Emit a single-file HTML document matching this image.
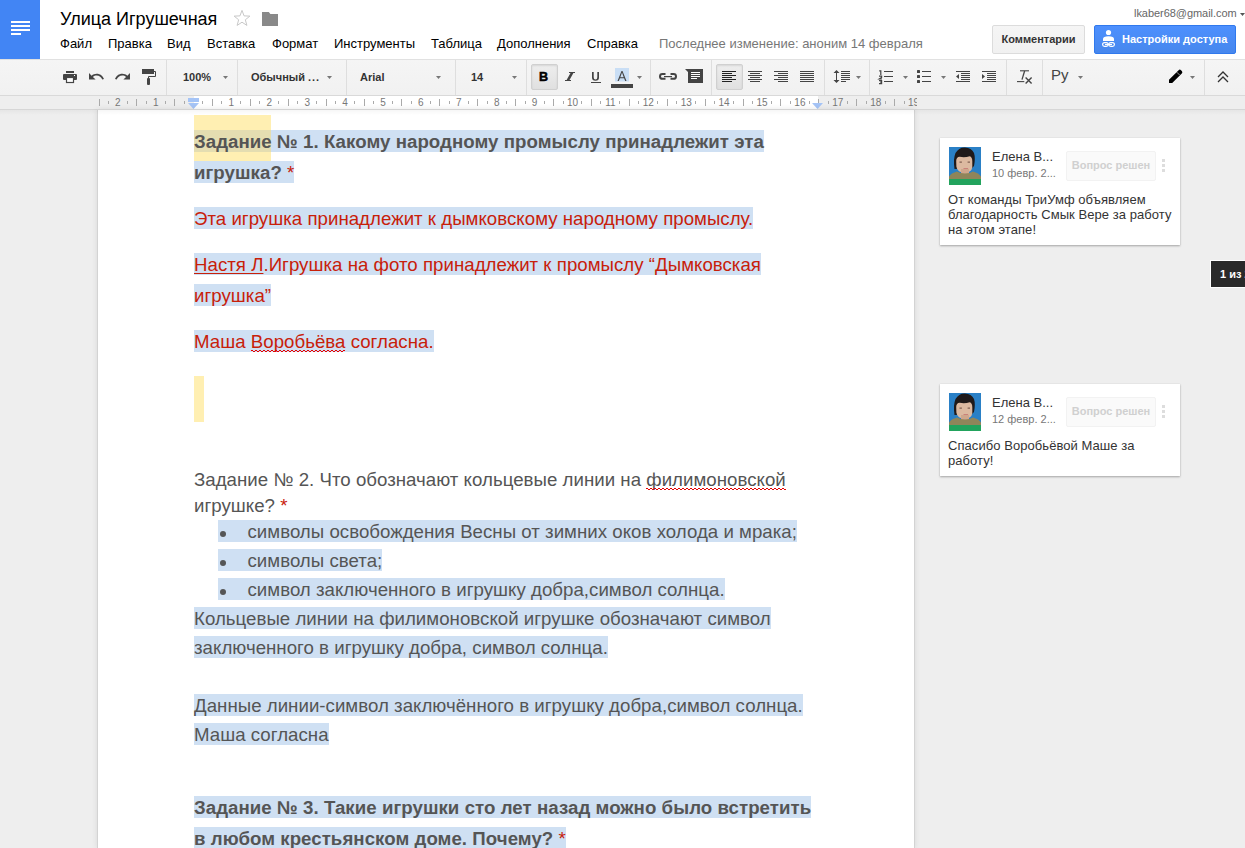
<!DOCTYPE html>
<html><head><meta charset="utf-8">
<style>
*{margin:0;padding:0;box-sizing:border-box}
html,body{width:1245px;height:848px;overflow:hidden;background:#fff;font-family:"Liberation Sans",sans-serif}
.a{position:absolute;white-space:nowrap}
#hdr{position:absolute;left:0;top:0;width:1245px;height:60px;background:#fff;border-bottom:1px solid #e1e1e1}
#logo{position:absolute;left:0;top:0;width:40px;height:59px;background:#4285f4}
#logo i{position:absolute;left:11px;height:2px;background:#fff;width:19px}
#title{left:60px;top:9px;font-size:18px;color:#000;line-height:21px}
.menu{top:36px;font-size:13px;color:#000;line-height:15px}
#lastmod{left:659px;top:36px;font-size:13px;color:#777;line-height:15px}
#email{left:1134px;top:7px;font-size:11px;color:#666;line-height:13px;letter-spacing:-.05px}
.btn{position:absolute;top:25px;height:29px;border-radius:2px;font-size:11px;font-weight:bold;line-height:27px;white-space:nowrap}
#bcom{left:992px;width:93px;background:linear-gradient(#f5f5f5,#f1f1f1);border:1px solid #dcdcdc;color:#333;text-align:center}
#bshare{left:1094px;width:142px;background:linear-gradient(#4d90fe,#4787ed);border:1px solid #3079ed;color:#fff;padding-left:27px}
#tb{position:absolute;left:0;top:60px;width:1245px;height:36px;background:linear-gradient(#f5f5f5,#f1f1f1);border-bottom:1px solid #d9d9d9}
.sep{position:absolute;top:60px;width:1px;height:35px;background:#dedede}
.tbt{font-size:11px;font-weight:bold;color:#333;top:71px;line-height:13px}
.tbb{position:absolute;top:64px;width:27px;height:26px;border:1px solid #d0d0d0;border-radius:2px;background:linear-gradient(#eee,#e0e0e0);box-shadow:inset 0 1px 2px rgba(0,0,0,.1)}
#ruler{position:absolute;left:0;top:96px;width:1245px;height:14px;background:#eee;border-bottom:1px solid #d6d6d6}
#editor{position:absolute;left:0;top:110px;width:1245px;height:738px;background:#eee}
#page{position:absolute;left:98px;top:110px;width:816px;height:738px;background:#fff;box-shadow:0 0 0 1px #d3d3d3,0 0 6px 1px rgba(0,0,0,.09)}
#tshadow{position:absolute;left:0;top:110px;width:1245px;height:5px;background:linear-gradient(rgba(0,0,0,.035),rgba(0,0,0,0))}
.ln{position:absolute;height:22px;line-height:24px;font-size:18.67px;white-space:nowrap;color:#555;letter-spacing:.025px}
.ln.b{letter-spacing:.05px}
.sel{background:#cfe0f3}
.b{font-weight:bold}
.r{color:#c8200a}
.card{position:absolute;left:940px;width:240px;background:#fff;box-shadow:0 1px 2px rgba(0,0,0,.3),0 0 1px rgba(0,0,0,.1)}
.hl{position:absolute;background:#ffefb2}
.hl2{position:absolute;background:#e4ddb1}
.dot{position:absolute;left:1.5px;top:11px;width:6px;height:6px;border-radius:50%;background:#555}
.sp{position:relative}
.sp:after{content:"";position:absolute;left:0;right:0;top:19.4px;height:2px;background-image:linear-gradient(90deg,#e60000 50%,transparent 50%),linear-gradient(90deg,transparent 50%,#e60000 50%);background-size:4px 1px,4px 1px;background-position:0 0,0 1px;background-repeat:repeat-x}
u{text-decoration-thickness:1px;text-underline-offset:2px}
.cn{font-size:13px;color:#333;line-height:15px}
.cd{font-size:11px;color:#777;line-height:13px;margin-top:1px}
.ct{font-size:13px;color:#333;line-height:15px;letter-spacing:.06px}
.rb{position:absolute;left:1066px;width:90px;height:30px;background:#fafafa;border:1px solid #f2f2f2;border-radius:2px;color:#d0d0d0;font-size:11px;font-weight:bold;line-height:27px;text-align:center;white-space:nowrap}
.dots{position:absolute;left:1162px;width:3px;height:13px}
.dots i{position:absolute;left:0;top:0;width:3px;height:3px;background:#ddd}
.badge{position:absolute;left:1210px;top:260px;width:60px;height:28px;background:#2a2a2a;border:1px solid #fff;border-right:0;color:#fff;font-size:11px;font-weight:bold;line-height:27px;padding-left:9px;white-space:nowrap}
</style></head><body>
<div id="hdr"></div>
<div id="logo"><i style="top:21px"></i><i style="top:25px"></i><i style="top:29px"></i><i style="top:33px;width:10px"></i></div>
<div class="a" id="title">Улица Игрушечная</div>
<div class="a menu" style="left:60px">Файл</div>
<div class="a menu" style="left:108px">Правка</div>
<div class="a menu" style="left:167px">Вид</div>
<div class="a menu" style="left:207px">Вставка</div>
<div class="a menu" style="left:272px">Формат</div>
<div class="a menu" style="left:334px">Инструменты</div>
<div class="a menu" style="left:431px">Таблица</div>
<div class="a menu" style="left:497px">Дополнения</div>
<div class="a menu" style="left:587px">Справка</div>
<div class="a" id="lastmod">Последнее изменение: аноним 14 февраля</div>
<div class="a" id="email">lkaber68@gmail.com</div>
<div class="btn" id="bcom">Комментарии</div>
<div class="btn" id="bshare">Настройки доступа</div>

<div id="tb"></div>
<div class="sep" style="left:166px"></div>
<div class="sep" style="left:237px"></div>
<div class="sep" style="left:346px"></div>
<div class="sep" style="left:455px"></div>
<div class="sep" style="left:526px"></div>
<div class="sep" style="left:650px"></div>
<div class="sep" style="left:711px"></div>
<div class="sep" style="left:824px"></div>
<div class="sep" style="left:869px"></div>
<div class="sep" style="left:1006px"></div>
<div class="sep" style="left:1042px"></div>
<div class="sep" style="left:1204px"></div>
<div class="tbb" style="left:531px"></div>
<div class="tbb" style="left:716px"></div>
<div class="a tbt" style="left:183px">100%</div>
<div class="a tbt" style="left:251px"><span>Обычный</span> <span style="letter-spacing:1px">...</span></div>
<div class="a tbt" style="left:360px">Arial</div>
<div class="a tbt" style="left:471px">14</div>
<svg class="a" style="left:0;top:0" width="1245" height="96" viewBox="0 0 1245 96">
<!-- share icon -->
<g fill="#fff">
<circle cx="1108.5" cy="32.5" r="2.6"/>
<path d="M1103 41 v-2 q0-2.7 5.5-2.7 q5.5 0 5.5 2.7 v2z"/>
</g>
<g fill="none" stroke="#fff" stroke-width="1.2">
<rect x="1102.6" y="42.6" width="5.6" height="3.8" rx="1.9"/>
<rect x="1108.8" y="42.6" width="5.6" height="3.8" rx="1.9"/>
<path d="M1105 44.5 h7"/>
</g>
<!-- dropdown email -->
<path d="M1240 13 h5 l-2.5 3z" fill="#555"/>
<!-- star -->
<path d="M242.00 10.40 L244.06 15.87 L249.89 16.14 L245.33 19.78 L246.88 25.41 L242.00 22.20 L237.12 25.41 L238.67 19.78 L234.11 16.14 L239.94 15.87z" fill="none" stroke="#c8c8c8" stroke-width="1" stroke-linejoin="miter"/>
<!-- folder -->
<path d="M262 12 h6.8 l1.6 2 h7.6 v12 h-16z" fill="#898989"/>

<g fill="#444">
<!-- print -->
<rect x="66" y="71" width="8" height="2"/>
<rect x="63" y="74" width="14" height="6" rx="1"/>
<rect x="66.5" y="77.5" width="7" height="5" fill="#fff" stroke="#444" stroke-width="1.2"/>
<rect x="74" y="75" width="1" height="1" fill="#fff"/>
<!-- undo -->
<path transform="translate(89,73) scale(0.732) translate(-2,-7)" d="M12.5 8c-2.65 0-5.05.99-6.9 2.6L2 7v9h9l-3.62-3.62c1.39-1.16 3.16-1.88 5.12-1.88 3.54 0 6.55 2.31 7.6 5.5l2.37-.78C21.08 11.03 17.15 8 12.5 8z"/>
<!-- redo -->
<path transform="translate(115,73) scale(0.732) translate(-1.54,-7)" d="M18.4 10.6C16.55 8.99 14.15 8 11.5 8c-4.65 0-8.58 3.03-9.96 7.22L3.9 16c1.05-3.19 4.05-5.5 7.6-5.5 1.95 0 3.73.72 5.12 1.88L13 16h9V7l-3.6 3.6z"/>
<!-- paint format -->
<rect x="142" y="69" width="12" height="5"/>
<path d="M154 71.5 h1.5 v5 h-7 v2" fill="none" stroke="#444" stroke-width="1"/>
<rect x="147" y="78" width="3" height="7" rx="1"/>
</g>
<!-- dropdown arrows -->
<g fill="#777">
<path d="M223 76 h5 l-2.5 3z"/>
<path d="M327 76 h5 l-2.5 3z"/>
<path d="M436 76 h5 l-2.5 3z"/>
<path d="M512 76 h5 l-2.5 3z"/>
<path d="M637 76 h5 l-2.5 3z"/>
<path d="M856 76 h5 l-2.5 3z"/>
<path d="M903 76 h5 l-2.5 3z"/>
<path d="M941 76 h5 l-2.5 3z"/>
<path d="M1078 76 h5 l-2.5 3z"/>
<path d="M1190 76 h5 l-2.5 3z"/>
</g>
<!-- B I U -->
<text x="539" y="81" font-family="Liberation Sans" font-weight="bold" font-size="12.6" fill="#000" stroke="#000" stroke-width=".5">B</text>
<g fill="#444">
<path d="M569 72 h6 v1 h-1.6 l-3.9 7 h1.5 v1 h-6 v-1 h1.6 l3.9-7 h-1.5z"/>
<path d="M592 72 h1.7 v5.3 q0 2.2 1.8 2.2 q1.8 0 1.8-2.2 v-5.3 h1.7 v5.4 q0 3.3-3.5 3.3 q-3.5 0-3.5-3.3z"/>
<rect x="591" y="82" width="10" height="1"/>
</g>
<!-- A text color -->
<rect x="615" y="68" width="14" height="13.5" fill="#c9def5"/>
<path d="M617.5 81 l4-10 h1 l4 10 h-1.3 l-1.1-2.8 h-4.2 l-1.1 2.8z M620.3 77.2 h3.4 l-1.7-4.6z" fill="#444"/>
<rect x="611" y="84" width="22" height="4" fill="#444"/>
<!-- link -->
<g fill="none" stroke="#444" stroke-width="2">
<path d="M665.5 74 h-3 q-2.5 0-2.5 2.4 q0 2.4 2.5 2.4 h3"/>
<path d="M670.5 74 h3 q2.5 0 2.5 2.4 q0 2.4-2.5 2.4 h-3"/>
</g>
<rect x="664" y="76" width="8" height="1.2" fill="#444"/>
<!-- comment -->
<path d="M685 69 h18 v14 h-15 v-11z" fill="#444"/>
<g fill="#fff">
<rect x="691" y="72" width="9" height="1"/>
<rect x="691" y="74" width="9" height="1"/>
<rect x="691" y="76" width="9" height="1"/>
<rect x="691" y="78" width="6" height="1"/>
</g>
<!-- align -->
<g fill="#222">
<rect x="722" y="71" width="14" height="1"/><rect x="722" y="73" width="10" height="1"/><rect x="722" y="75" width="14" height="1"/><rect x="722" y="77" width="10" height="1"/><rect x="722" y="79" width="14" height="1"/><rect x="722" y="81" width="10" height="1"/>
</g>
<g fill="#444">
<rect x="748" y="71" width="14" height="1"/><rect x="750" y="73" width="10" height="1"/><rect x="748" y="75" width="14" height="1"/><rect x="750" y="77" width="10" height="1"/><rect x="748" y="79" width="14" height="1"/><rect x="750" y="81" width="10" height="1"/>
<rect x="774" y="71" width="14" height="1"/><rect x="778" y="73" width="10" height="1"/><rect x="774" y="75" width="14" height="1"/><rect x="778" y="77" width="10" height="1"/><rect x="774" y="79" width="14" height="1"/><rect x="778" y="81" width="10" height="1"/>
<rect x="800" y="71" width="14" height="1"/><rect x="800" y="73" width="14" height="1"/><rect x="800" y="75" width="14" height="1"/><rect x="800" y="77" width="14" height="1"/><rect x="800" y="79" width="14" height="1"/><rect x="800" y="81" width="14" height="1"/>
<!-- line spacing -->
<rect x="836" y="71" width="1" height="11"/>
<path d="M833.5 73 l3-3 3 3z M833.5 80 l3 3 3-3z"/>
<rect x="841" y="71" width="9" height="1"/><rect x="841" y="73" width="9" height="1"/><rect x="841" y="75" width="9" height="1"/><rect x="841" y="77" width="9" height="1"/><rect x="841" y="79" width="9" height="1"/><rect x="841" y="81" width="5" height="1"/>
<!-- numbered -->
<path d="M879.2 70.8 h1.6 v4.2 M879 76.2 h2.6 v1.2 l-2.4 1.6 h2.8 M879 80.6 h2.6 v3 h-2.6 M880.2 82.1 h1.6" fill="none" stroke="#444" stroke-width="1.2"/>
<rect x="884" y="71" width="9" height="1"/><rect x="884" y="76" width="9" height="1"/><rect x="884" y="81" width="9" height="1"/>
<!-- bullets -->
<rect x="917" y="70" width="3" height="3" rx=".6"/><rect x="917" y="75" width="3" height="3" rx=".6"/><rect x="917" y="80" width="3" height="3" rx=".6"/>
<rect x="922" y="71" width="9" height="1"/><rect x="922" y="76" width="9" height="1"/><rect x="922" y="81" width="9" height="1"/>
<!-- decrease indent -->
<rect x="956" y="71" width="14" height="1"/><rect x="961" y="73" width="9" height="1"/><rect x="961" y="75" width="9" height="1"/><rect x="961" y="77" width="9" height="1"/><rect x="961" y="79" width="9" height="1"/><rect x="956" y="81" width="14" height="1"/>
<path d="M956 76.5 l3-2.5 v5z"/>
<!-- increase indent -->
<rect x="982" y="71" width="14" height="1"/><rect x="987" y="73" width="9" height="1"/><rect x="987" y="75" width="9" height="1"/><rect x="987" y="77" width="9" height="1"/><rect x="987" y="79" width="9" height="1"/><rect x="982" y="81" width="14" height="1"/>
<path d="M985 76.5 l-3-2.5 v5z"/>
</g>
<!-- clear formatting -->
<g fill="none" stroke="#444">
<path d="M1020 70.8 h9" stroke-width="1.1"/>
<path d="M1024.6 71 l-2.6 8.6" stroke-width="1.3"/>
<path d="M1017 81.6 h7.3" stroke-width="1.1"/>
<path d="M1025.6 77.6 l6 6 M1031.6 77.6 l-6 6" stroke-width="1.4"/>
</g>
<text x="1051" y="80" font-size="15" font-family="Liberation Sans" fill="#444">Ру</text>
<!-- pencil -->
<path d="M1169 83 v-3.2 l9.6-9.6 q1.2-1.2 2.4 0 l.8.8 q1.2 1.2 0 2.4 l-9.6 9.6z" fill="#000"/>
<path d="M1176.8 72.2 l2.8 2.8" stroke="#fff" stroke-width=".6"/>
<!-- chevrons -->
<path d="M1218 77 l5-5 5 5 M1218 82 l5-5 5 5" fill="none" stroke="#333" stroke-width="1.3"/>
</svg>


<div id="ruler"></div>
<svg class="a" style="left:0;top:96px" width="1245" height="13" viewBox="0 96 1245 13">
<rect x="194" y="96" width="624" height="13" fill="#fff"/>
<g fill="#aaa"><rect x="99" y="99" width="1" height="7"/><rect x="108" y="101" width="1" height="3"/><rect x="127" y="101" width="1" height="3"/><rect x="136" y="99" width="1" height="7"/><rect x="146" y="101" width="1" height="3"/><rect x="165" y="101" width="1" height="3"/><rect x="174" y="99" width="1" height="7"/><rect x="184" y="101" width="1" height="3"/><rect x="202" y="101" width="1" height="3"/><rect x="212" y="99" width="1" height="7"/><rect x="221" y="101" width="1" height="3"/><rect x="240" y="101" width="1" height="3"/><rect x="250" y="99" width="1" height="7"/><rect x="259" y="101" width="1" height="3"/><rect x="278" y="101" width="1" height="3"/><rect x="288" y="99" width="1" height="7"/><rect x="297" y="101" width="1" height="3"/><rect x="316" y="101" width="1" height="3"/><rect x="326" y="99" width="1" height="7"/><rect x="335" y="101" width="1" height="3"/><rect x="354" y="101" width="1" height="3"/><rect x="364" y="99" width="1" height="7"/><rect x="373" y="101" width="1" height="3"/><rect x="392" y="101" width="1" height="3"/><rect x="401" y="99" width="1" height="7"/><rect x="411" y="101" width="1" height="3"/><rect x="430" y="101" width="1" height="3"/><rect x="439" y="99" width="1" height="7"/><rect x="449" y="101" width="1" height="3"/><rect x="468" y="101" width="1" height="3"/><rect x="477" y="99" width="1" height="7"/><rect x="487" y="101" width="1" height="3"/><rect x="506" y="101" width="1" height="3"/><rect x="515" y="99" width="1" height="7"/><rect x="525" y="101" width="1" height="3"/><rect x="544" y="101" width="1" height="3"/><rect x="553" y="99" width="1" height="7"/><rect x="563" y="101" width="1" height="3"/><rect x="581" y="101" width="1" height="3"/><rect x="591" y="99" width="1" height="7"/><rect x="600" y="101" width="1" height="3"/><rect x="619" y="101" width="1" height="3"/><rect x="629" y="99" width="1" height="7"/><rect x="638" y="101" width="1" height="3"/><rect x="657" y="101" width="1" height="3"/><rect x="667" y="99" width="1" height="7"/><rect x="676" y="101" width="1" height="3"/><rect x="695" y="101" width="1" height="3"/><rect x="705" y="99" width="1" height="7"/><rect x="714" y="101" width="1" height="3"/><rect x="733" y="101" width="1" height="3"/><rect x="743" y="99" width="1" height="7"/><rect x="752" y="101" width="1" height="3"/><rect x="771" y="101" width="1" height="3"/><rect x="780" y="99" width="1" height="7"/><rect x="790" y="101" width="1" height="3"/><rect x="809" y="101" width="1" height="3"/><rect x="818" y="99" width="1" height="7"/><rect x="828" y="101" width="1" height="3"/><rect x="847" y="101" width="1" height="3"/><rect x="856" y="99" width="1" height="7"/><rect x="866" y="101" width="1" height="3"/><rect x="885" y="101" width="1" height="3"/><rect x="894" y="99" width="1" height="7"/><rect x="904" y="101" width="1" height="3"/></g>
<g fill="#777" font-family="Liberation Sans" font-size="10" text-anchor="middle"><text x="117.9" y="106">2</text><text x="155.7" y="106">1</text><text x="231.4" y="106">1</text><text x="269.3" y="106">2</text><text x="307.2" y="106">3</text><text x="345.1" y="106">4</text><text x="383.0" y="106">5</text><text x="420.9" y="106">6</text><text x="458.8" y="106">7</text><text x="496.7" y="106">8</text><text x="534.6" y="106">9</text><text x="572.5" y="106">10</text><text x="610.4" y="106">11</text><text x="648.3" y="106">12</text><text x="686.2" y="106">13</text><text x="724.1" y="106">14</text><text x="762.0" y="106">15</text><text x="799.9" y="106">16</text><text x="837.8" y="106">17</text><text x="875.7" y="106">18</text><text x="913.6" y="106">19</text></g>
<rect x="917" y="96" width="328" height="13" fill="#eee"/>
<rect x="188" y="98" width="11" height="4" fill="#a5c4f6"/><path d="M188 103 h11 l-5.5 6z" fill="#a5c4f6"/>
<path d="M812 103 h11 l-5.5 6z" fill="#a5c4f6"/>
</svg>
<div id="editor"></div>
<div id="page"></div>
<div id="tshadow"></div>
<div class="hl" style="left:194px;top:115px;width:77px;height:46px"></div>
<div class="ln b sel" style="left:194px;top:130px"><i class="hl2" style="left:0;top:0;width:77px;height:22px"></i><span style="position:relative">Задание № 1. Какому народному промыслу принадлежит эта </span></div>
<div class="ln b sel" style="left:194px;top:161px">игрушка? <span class="r" style="font-weight:normal">*</span></div>
<div class="ln r sel" style="left:194px;top:207px">Эта игрушка принадлежит к дымковскому народному промыслу.</div>
<div class="ln r sel" style="left:194px;top:253px"><u>Настя Л</u>.Игрушка на фото принадлежит к промыслу “Дымковская </div>
<div class="ln r sel" style="left:194px;top:284px">игрушка”</div>
<div class="ln r sel" style="left:194px;top:330px">Маша <span class="sp">Воробьёва</span> согласна.</div>
<div class="hl" style="left:194px;top:376px;width:10px;height:46px"></div>
<div class="ln" style="left:194px;top:468px">Задание № 2. Что обозначают кольцевые линии на <span class="sp">филимоновской</span></div>
<div class="ln" style="left:194px;top:494px">игрушке? <span class="r">*</span></div>
<div class="ln sel" style="left:218px;top:520px;padding-left:29.5px"><i class="dot"></i>символы освобождения Весны от зимних оков холода и мрака;</div>
<div class="ln sel" style="left:218px;top:549px;padding-left:29.5px"><i class="dot"></i>символы света;</div>
<div class="ln sel" style="left:218px;top:578px;padding-left:29.5px"><i class="dot"></i>символ заключенного в игрушку добра,символ солнца.</div>
<div class="ln sel" style="left:194px;top:607px">Кольцевые линии на филимоновской игрушке обозначают символ </div>
<div class="ln sel" style="left:194px;top:636px">заключенного в игрушку добра, символ солнца.</div>
<div class="ln sel" style="left:194px;top:694px">Данные линии-символ заключённого в игрушку добра,символ солнца.</div>
<div class="ln sel" style="left:194px;top:723px">Маша согласна</div>
<div class="ln b sel" style="left:194px;top:796px">Задание № 3. Такие игрушки сто лет назад можно было встретить </div>
<div class="ln b sel" style="left:194px;top:827px">в любом крестьянском доме. Почему? <span class="r" style="font-weight:normal">*</span></div>


<div class="card" style="top:138px;height:107px"></div>
<svg class="a" style="left:949px;top:147px" width="32" height="38" viewBox="0 0 32 38">
<rect width="32" height="32" fill="#2a80c6"/>
<path d="M5.5 22 q-1.5-10 1-16 q3.5-6 9.5-5.6 q6.5 .4 9 5.6 q1.6 5 0 13 l-2 2z" fill="#1f1a1a"/>
<path d="M7.2 14 q0-4 3.5-4.2 q5 1.2 10-.6 q2.6 .8 2.6 5 v6 q-.8 5.4-7.6 5.6 q-7.3-.2-8.3-6z" fill="#dcb9a0"/>
<rect x="10.5" y="14.6" width="2.4" height="1" fill="#6b4b3f"/><rect x="18.6" y="14.6" width="2.4" height="1" fill="#6b4b3f"/>
<rect x="14.5" y="21" width="4.6" height="1.2" fill="#c9827a"/>
<rect x="12" y="22" width="8" height="5" fill="#cfa68c"/><path d="M0 32 v-2.5 q2-3.5 8-5 q3 2 8 2 q5 0 8-2 q6 1.5 8 5 v2.5z" fill="#8f855a"/>
<rect y="32" width="32" height="6" fill="#22a35d"/>
</svg>
<div class="a cn" style="left:992px;top:149px">Елена В...</div>
<div class="a cd" style="left:992px;top:166px">10 февр. 2...</div>
<div class="rb" style="top:151px">Вопрос решен</div>
<div class="dots" style="top:159px"><i></i><i style="top:5px"></i><i style="top:10px"></i></div>
<div class="a ct" style="left:948px;top:192px">От команды ТриУмф объявляем<br>благодарность Смык Вере за работу<br>на этом этапе!</div>
<div class="card" style="top:384px;height:92px"></div>
<svg class="a" style="left:949px;top:393px" width="32" height="38" viewBox="0 0 32 38">
<rect width="32" height="32" fill="#2a80c6"/>
<path d="M5.5 22 q-1.5-10 1-16 q3.5-6 9.5-5.6 q6.5 .4 9 5.6 q1.6 5 0 13 l-2 2z" fill="#1f1a1a"/>
<path d="M7.2 14 q0-4 3.5-4.2 q5 1.2 10-.6 q2.6 .8 2.6 5 v6 q-.8 5.4-7.6 5.6 q-7.3-.2-8.3-6z" fill="#dcb9a0"/>
<rect x="10.5" y="14.6" width="2.4" height="1" fill="#6b4b3f"/><rect x="18.6" y="14.6" width="2.4" height="1" fill="#6b4b3f"/>
<rect x="14.5" y="21" width="4.6" height="1.2" fill="#c9827a"/>
<rect x="12" y="22" width="8" height="5" fill="#cfa68c"/><path d="M0 32 v-2.5 q2-3.5 8-5 q3 2 8 2 q5 0 8-2 q6 1.5 8 5 v2.5z" fill="#8f855a"/>
<rect y="32" width="32" height="6" fill="#22a35d"/>
</svg>
<div class="a cn" style="left:992px;top:395px">Елена В...</div>
<div class="a cd" style="left:992px;top:412px">12 февр. 2...</div>
<div class="rb" style="top:397px">Вопрос решен</div>
<div class="dots" style="top:405px"><i></i><i style="top:5px"></i><i style="top:10px"></i></div>
<div class="a ct" style="left:948px;top:438px">Спасибо Воробьёвой Маше за<br>работу!</div>
<div class="badge">1 из 2</div>

</body></html>
